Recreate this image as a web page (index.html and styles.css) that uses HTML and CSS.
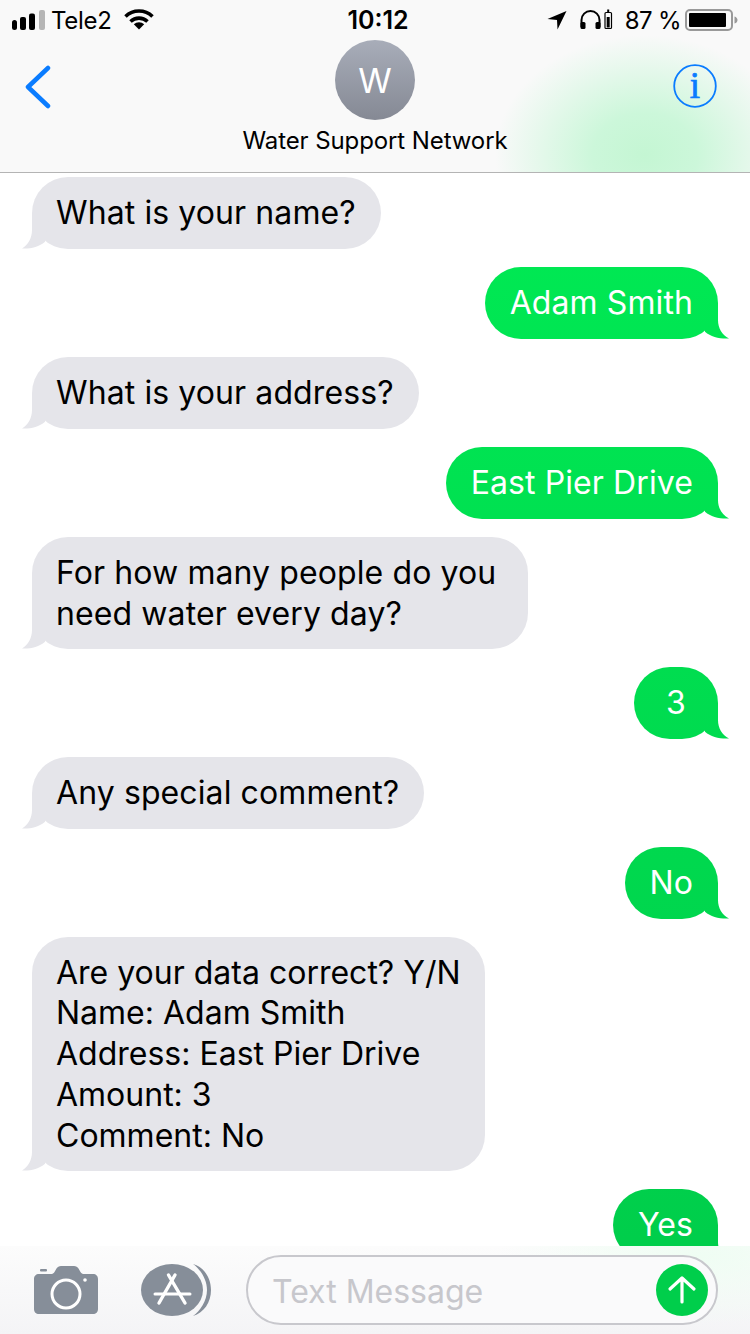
FILE: index.html
```html
<!DOCTYPE html>
<html lang="en">
  <head>
    <meta charset="UTF-8" />
    <title>Water Support Network</title>
    <link rel="stylesheet" href="styles.css">
  </head>
  <body>
    <div class="phone">
      <header class="top">
        <div class="status">
          <div class="status-left">
            <svg class="signal" width="33" height="20" viewBox="0 0 33 20">
              <rect x="0" y="10" width="5" height="10" rx="2.500" fill="#000"/>
              <rect x="8" y="7" width="6" height="13" rx="2" fill="#000"/>
              <rect x="17" y="3.500" width="6" height="16.500" rx="2" fill="#000"/>
              <rect x="27" y="0" width="6" height="20" rx="2" fill="#b5b5b5"/>
            </svg>
            <span class="carrier">Tele2</span>
            <svg class="wifi" width="30" height="22" viewBox="0 0 30 22">
              <path d="M1.500 7.500a19.500 19.500 0 0 1 27 0" fill="none" stroke="#000" stroke-width="3.600"/>
              <path d="M6.500 12.500a12.500 12.500 0 0 1 17 0" fill="none" stroke="#000" stroke-width="3.600"/>
              <path d="M15 20.500l-5.200-5.200a7.400 7.400 0 0 1 10.400 0z" fill="#000"/>
            </svg>
          </div>
          <div class="clock">10:12</div>
          <div class="status-right">
            <svg class="arrow" width="20" height="20" viewBox="0 0 20 20">
              <path d="M19.500 1 0.500 9 10 10 10.500 19.500z" fill="#000"/>
            </svg>
            <svg class="phones" width="34" height="22" viewBox="0 0 34 22">
              <path d="M2.500 18V11a9 9 0 0 1 18 0V18" fill="none" stroke="#000" stroke-width="2"/>
              <rect x="1.500" y="13" width="5" height="7" rx="1.500" fill="#000"/>
              <rect x="16.500" y="13" width="5" height="7" rx="1.500" fill="#000"/>
              <rect x="26" y="3.500" width="6.500" height="16" rx="1" fill="none" stroke="#000" stroke-width="1.200"/>
              <rect x="28.200" y="0.500" width="2" height="3" fill="#000"/>
              <rect x="27.700" y="8" width="3" height="10.500" fill="#000"/>
            </svg>
            <span class="percent">87 %</span>
            <svg width="54" height="24" viewBox="0 0 54 24">
              <rect x="1" y="2" width="46" height="20" rx="4" fill="none" stroke="#999" stroke-width="2"/>
              <rect x="4" y="5" width="37" height="14" rx="1" fill="#000"/>
              <path d="M49.500 8.500c2 .5 3 2 3 3.500s-1 3-3 3.500z" fill="#999"/>
            </svg>
          </div>
        </div>
        <div class="nav">
          <svg class="back" width="26" height="44" viewBox="0 0 26 44">
            <path d="M23 3 3 22l20 19" fill="none" stroke="#0a7cff" stroke-width="4.500" stroke-linecap="round" stroke-linejoin="round"/>
          </svg>
          <div class="contact">
            <div class="avatar">W</div>
            <div class="name">Water Support Network</div>
          </div>
          <svg class="info" width="44" height="44" viewBox="0 0 44 44">
            <circle cx="22" cy="22" r="20.800" fill="none" stroke="#0a7cff" stroke-width="1.800"/>
            <text x="22" y="34" text-anchor="middle" class="info-i">i</text>
          </svg>
        </div>
      </header>

      <main class="thread">
        <div class="msg in">What is your name?</div>
        <div class="msg out">Adam Smith</div>
        <div class="msg in">What is your address?</div>
        <div class="msg out">East Pier Drive</div>
        <div class="msg in two-lines">For how many people do you<br>need water every day?</div>
        <div class="msg out">3</div>
        <div class="msg in">Any special comment?</div>
        <div class="msg out">No</div>
        <div class="msg in five-lines">Are your data correct? Y/N<br>Name: Adam Smith<br>Address: East Pier Drive<br>Amount: 3<br>Comment: No</div>
        <div class="msg out">Yes</div>
      </main>

      <footer class="bar">
        <svg class="camera" width="64" height="48" viewBox="0 0 64 48">
          <path fill="#868e99" d="M5 8h12c1.500 0 2.500-.5 3.500-2l2-3.500C23.500 1 25 0 27 0h13c2 0 3.500 1 4.500 2.500l2 3.500c1 1.500 2 2 3.500 2h9c3 0 5 2 5 5v30c0 3-2 5-5 5H5c-3 0-5-2-5-5V13c0-3 2-5 5-5z"/>
          <rect x="6" y="3" width="7" height="2.500" rx="1" fill="#868e99"/>
          <circle cx="32" cy="28" r="14" fill="none" stroke="#fff" stroke-width="3"/>
          <circle cx="51" cy="14" r="1.800" fill="#fff"/>
        </svg>
        <svg class="store" width="72" height="54" viewBox="0 0 72 54">
          <path d="M52 1c11 3 18 14 18 26s-7 23-18 26c7-5 14-15 14-26S59 6 52 1z" fill="#868e99"/>
          <ellipse cx="31" cy="27" rx="31" ry="26" fill="#868e99"/>
          <g fill="none" stroke="#fff" stroke-linecap="round">
            <path d="M34 12 18 40" stroke-width="3.400"/>
            <path d="M27.500 12 44 40" stroke-width="3.400"/>
            <path d="M14 31h35" stroke-width="3"/>
          </g>
        </svg>
        <div class="field">
          <span class="placeholder">Text Message</span>
          <div class="send">
            <svg width="30" height="30" viewBox="0 0 30 30">
              <path d="M15 27V3M3 14 15 3l12 11" fill="none" stroke="#fff" stroke-width="3.200" stroke-linecap="round" stroke-linejoin="round"/>
            </svg>
          </div>
        </div>
      </footer>
    </div>
  </body>
</html>
```

FILE: styles.css
```css
* {
  box-sizing: border-box;
}
html, body {
  margin: 0;
  background: #fff;
}
body {
  font-family: Inter, "Liberation Sans", sans-serif;
  color: #000;
}
svg {
  display: block;
  flex: none;
}
.phone {
  width: 750px;
  height: 1334px;
  display: flex;
  flex-direction: column;
  overflow: hidden;
}

/* top bar */
.top {
  height: 173px;
  flex: none;
  border-bottom: 1px solid #b4b4b4;
  background:
    radial-gradient(ellipse 150px 120px at 645px 155px, #c4f6d3 0%, #ccf7da 35%, rgba(249, 249, 249, 0) 100%),
    #f9f9f9;
}
.status {
  height: 40px;
  display: grid;
  grid-template-columns: 1fr auto 1fr;
  align-items: center;
  padding: 0 11px 0 12px;
  font-size: 24px;
}
.status-left {
  display: flex;
  align-items: center;
  gap: 6px;
}
.carrier {
  letter-spacing: -0.3px;
}
.status-left .wifi {
  margin-left: 6px;
}
.clock {
  font-weight: 600;
  font-size: 25px;
  padding-left: 5px;
}
.status-right {
  display: flex;
  align-items: center;
  justify-content: flex-end;
}
.arrow {
  margin-right: 12px;
}
.phones {
  margin-right: 12px;
}
.percent {
  letter-spacing: -0.6px;
  margin-right: 4px;
}
.nav {
  display: flex;
  justify-content: space-between;
  padding: 0 33px 0 25px;
  position: relative;
}
.back {
  margin-top: 25px;
}
.info {
  margin-top: 24px;
}
.info-i {
  font-family: "Liberation Serif", serif;
  font-size: 37px;
  fill: #0a7cff;
  stroke: #0a7cff;
  stroke-width: 0.7px;
}
.contact {
  position: absolute;
  left: 0;
  right: 0;
  top: 0;
  display: flex;
  flex-direction: column;
  align-items: center;
}
.avatar {
  width: 80px;
  height: 80px;
  border-radius: 50%;
  background: linear-gradient(#a8adb9, #858994);
  color: #fff;
  font-size: 34px;
  display: flex;
  align-items: center;
  justify-content: center;
}
.name {
  font-size: 24px;
  letter-spacing: -0.1px;
  margin-top: 7px;
  line-height: 28px;
}

/* messages */
.thread {
  flex: 1;
  min-height: 0;
  overflow: hidden;
  display: flex;
  flex-direction: column;
  align-items: flex-start;
  gap: 18px;
  padding: 4px 32px 0;
}
.msg {
  flex: none;
  position: relative;
  font-size: 32px;
  letter-spacing: 0.1px;
  line-height: 40.75px;
  padding: 15.625px 25px;
  border-radius: 36px;
  white-space: nowrap;
}
.msg::after {
  content: "";
  position: absolute;
  bottom: 0;
  width: 30px;
  height: 36px;
  background: inherit;
}
.in {
  background: #e5e5ea;
  padding-left: 24px;
}
.in::after {
  left: -12px;
  clip-path: path("M12 0 L12 17 C12 25 8 32 2 35.500 C10 36 19 34 25 28.700 L30 0 Z");
}
.two-lines {
  width: 496px;
  padding-top: 15.750px;
  padding-bottom: 14.750px;
}
.five-lines {
  width: 453px;
  letter-spacing: 0;
  padding-top: 15.625px;
  padding-bottom: 14.625px;
}
.out {
  align-self: flex-end;
  min-width: 84px;
  text-align: center;
  color: #fff;
  background: linear-gradient(#00e853 250px, #00ce4b 1240px) fixed;
}
.out::after {
  right: -12px;
  clip-path: path("M18 0 L18 17 C18 25 22 32 29 35.500 C20 36 11 34 5 28.700 L0 0 Z");
}

/* bottom bar */
.bar {
  height: 88px;
  flex: none;
  display: flex;
  align-items: center;
  padding: 0 32px 0 34px;
  background:
    radial-gradient(ellipse 200px 70px at 700px 10px, #effdf3 0%, rgba(248, 248, 248, 0) 100%),
    linear-gradient(#fcfcfc, #f4f4f6);
}
.store {
  margin-left: 43px;
}
.field {
  margin-left: 33px;
  flex: 1;
  height: 70px;
  border: 2px solid #c8c8cd;
  border-radius: 35px;
  background: #fafafb;
  display: flex;
  align-items: center;
  justify-content: space-between;
  padding: 0 8px 0 24px;
}
.placeholder {
  font-size: 32px;
  margin-top: 2px;
  color: #c7c7cc;
}
.send {
  width: 52px;
  height: 52px;
  border-radius: 50%;
  background: #00ce4b;
  display: flex;
  align-items: center;
  justify-content: center;
}
```
